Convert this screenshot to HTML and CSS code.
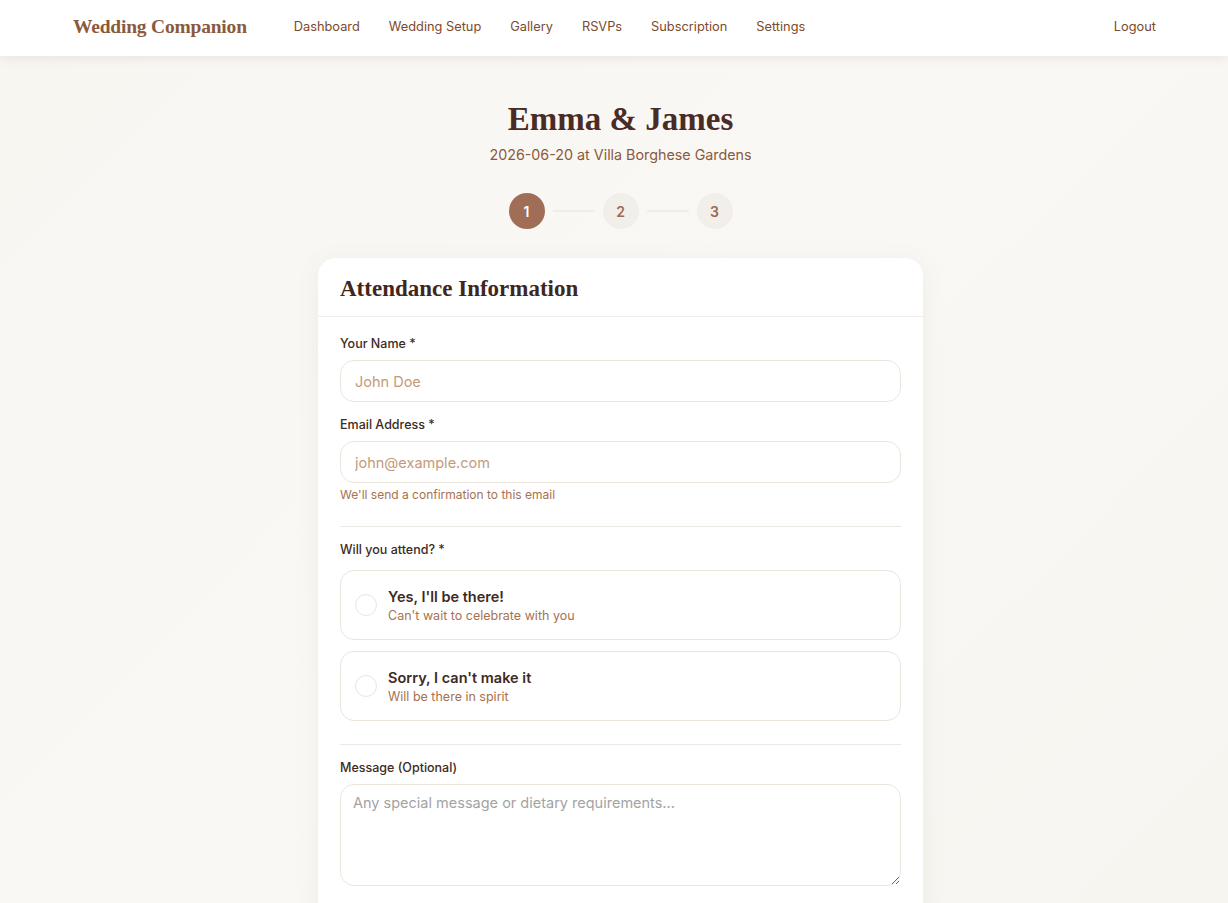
FILE: index.html
```html
<!DOCTYPE html>
<html lang="en">
<head>
<meta charset="utf-8">
<title>RSVP - Emma & James</title>
<link rel="stylesheet" href="styles.css">
</head>
<body>
<nav class="topnav">
  <div class="nav-inner">
    <a class="brand" href="#">Wedding Companion</a>
    <ul class="nav-links">
      <li><a href="#">Dashboard</a></li>
      <li><a href="#">Wedding Setup</a></li>
      <li><a href="#">Gallery</a></li>
      <li><a href="#">RSVPs</a></li>
      <li><a href="#">Subscription</a></li>
      <li><a href="#">Settings</a></li>
    </ul>
    <a class="logout" href="#">Logout</a>
  </div>
</nav>

<main class="page">
  <header class="hero">
    <h1 class="couple">Emma &amp; James</h1>
    <p class="details">2026-06-20 at Villa Borghese Gardens</p>
    <div class="steps">
      <span class="step active">1</span>
      <span class="step-line"></span>
      <span class="step">2</span>
      <span class="step-line"></span>
      <span class="step">3</span>
    </div>
  </header>

  <section class="card">
    <div class="card-header">
      <h2>Attendance Information</h2>
    </div>
    <form class="card-body">
      <div class="field">
        <label class="label">Your Name *</label>
        <input class="input" type="text" placeholder="John Doe">
      </div>
      <div class="field">
        <label class="label">Email Address *</label>
        <input class="input" type="email" placeholder="john@example.com">
        <p class="hint">We'll send a confirmation to this email</p>
      </div>
      <hr class="divider">
      <div class="field field-options">
        <label class="label">Will you attend? *</label>
        <div class="options">
          <label class="option">
            <span class="radio"></span>
            <span class="option-text">
              <span class="option-title">Yes, I'll be there!</span>
              <span class="option-sub">Can't wait to celebrate with you</span>
            </span>
          </label>
          <label class="option">
            <span class="radio"></span>
            <span class="option-text">
              <span class="option-title">Sorry, I can't make it</span>
              <span class="option-sub">Will be there in spirit</span>
            </span>
          </label>
        </div>
      </div>
      <hr class="divider">
      <div class="field">
        <label class="label">Message (Optional)</label>
        <textarea class="textarea" placeholder="Any special message or dietary requirements..."></textarea>
      </div>
    </form>
  </section>
</main>
</body>
</html>
```

FILE: styles.css
```css
* { box-sizing: border-box; }

html, body {
  margin: 0;
  padding: 0;
}

body {
  font-family: Inter, "Noto Sans", "Liberation Sans", sans-serif;
  background: linear-gradient(135deg, #f8f6f1 0%, #faf8f5 50%, #f7f5f0 100%);
  min-height: 903px;
  color: #3d2a22;
}

a { text-decoration: none; }

.topnav {
  background: #ffffff;
  height: 56px;
  box-shadow: 0 2px 10px rgba(120, 100, 80, 0.12);
}

.nav-inner {
  max-width: 1084px;
  margin: 0 auto;
  height: 56px;
  padding: 0 0 3px 1px;
  display: flex;
  align-items: center;
}

.brand {
  font-family: "Liberation Serif", "DejaVu Serif", serif;
  font-weight: 700;
  font-size: 19.5px;
  color: #8b5a3c;
  letter-spacing: -0.2px;
  margin-right: 47px;
}

.nav-links {
  list-style: none;
  margin: 0;
  padding: 0;
  display: flex;
  align-items: center;
  gap: 29px;
  flex: 1;
}

.nav-links li {
  font-size: 12.8px;
}

.nav-links a, .logout {
  font-size: 12.8px;
  color: #7c4a2d;
  font-weight: 400;
}

.page {
  display: flex;
  flex-direction: column;
  align-items: center;
  padding-left: 13px;
}

.hero {
  text-align: center;
  padding-top: 43px;
}

.couple {
  font-family: "Liberation Serif", "DejaVu Serif", serif;
  font-weight: 700;
  font-size: 33px;
  line-height: 40px;
  color: #4a2c24;
  margin: 0;
}

.details {
  margin: 6px 0 0;
  font-size: 14.3px;
  color: #8b5a3c;
  line-height: 20px;
}

.steps {
  margin-top: 28px;
  display: flex;
  align-items: center;
  justify-content: center;
}

.step {
  width: 36px;
  height: 36px;
  border-radius: 50%;
  background: #f2eee9;
  color: #9c6a4e;
  font-size: 14px;
  font-weight: 600;
  display: flex;
  align-items: center;
  justify-content: center;
}

.step.active {
  background: #a06e56;
  color: #ffffff;
}

.step-line {
  width: 42px;
  height: 2px;
  background: #f0ece6;
  margin: 0 8px;
}

.card {
  margin-top: 29px;
  width: 605px;
  background: #ffffff;
  border-radius: 18px;
  box-shadow: 0 4px 24px rgba(120, 100, 80, 0.08);
  overflow: hidden;
}

.card-header {
  padding: 16px 22px 12px;
  border-bottom: 1px solid #f1ede8;
}

.card-header h2 {
  margin: 0;
  font-family: "Liberation Serif", "DejaVu Serif", serif;
  font-weight: 700;
  font-size: 23px;
  line-height: 30px;
  color: #3f2720;
}

.card-body {
  padding: 19px 22px 20px;
  display: flex;
  flex-direction: column;
}

.field {
  display: flex;
  flex-direction: column;
  margin-bottom: 15px;
}

.field-options {
  margin-bottom: 17px;
}

.label {
  font-size: 12.5px;
  font-weight: 500;
  color: #3d2a22;
  line-height: 16px;
  margin-bottom: 8px;
}

.input, .textarea {
  width: 100%;
  border: 1px solid #ebe5dc;
  border-radius: 14px;
  background: #ffffff;
  font-family: Inter, "Noto Sans", sans-serif;
  font-size: 14.5px;
  color: #3d2a22;
  outline: none;
}

.input {
  height: 42px;
  padding: 0 14px;
}

.input::placeholder {
  color: #c49a7a;
}

.textarea {
  height: 102px;
  padding: 9px 12px;
  resize: vertical;
}

.textarea::placeholder {
  color: #a3a3a3;
}

.hint {
  margin: 4px 0 2px;
  font-size: 12px;
  line-height: 16px;
  color: #a8714f;
}

.divider {
  border: none;
  border-top: 1px solid #ece8e2;
  margin: 6px 0 15px;
}

.options {
  display: flex;
  flex-direction: column;
  gap: 11px;
  margin-top: 4px;
}

.option {
  display: flex;
  align-items: center;
  height: 70px;
  border: 1px solid #ebe5dc;
  border-radius: 14px;
  padding: 0 14px;
  gap: 11px;
  cursor: pointer;
}

.radio {
  width: 22px;
  height: 22px;
  border-radius: 50%;
  border: 1px solid #ebe5dc;
  flex: none;
}

.option-text {
  display: flex;
  flex-direction: column;
}

.option-title {
  font-size: 14.5px;
  font-weight: 600;
  color: #3d2a22;
  line-height: 20px;
}

.option-sub {
  font-size: 12.5px;
  color: #a8714f;
  line-height: 17px;
}
```
